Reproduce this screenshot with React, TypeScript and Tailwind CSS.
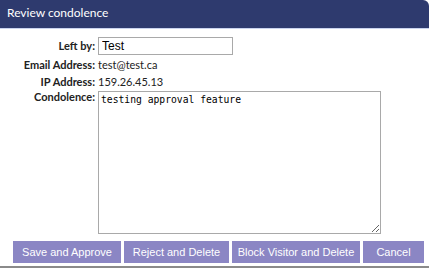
const buttons = [
  { label: 'Save and Approve', w: 'w-[108px]' },
  { label: 'Reject and Delete', w: 'w-[105px]' },
  { label: 'Block Visitor and Delete', w: 'w-[128px]' },
  { label: 'Cancel', w: 'w-[61px]' },
];

export default function App() {
  return (
    <div className="h-[268px] w-[429px] overflow-hidden bg-white font-['Lato',sans-serif]">
      {/* Dialog header */}
      <div className="h-[29px] rounded-tr-[6px] border-b border-[#c9d3ee] bg-[#2e3a6e] pl-[7px] pt-[5px] text-[12px] leading-[15px] text-white">
        Review condolence
      </div>

      {/* Form */}
      <div className="grid grid-cols-[95px_1fr] items-center gap-x-[3px] pt-[8px] text-[11px] text-[#222]">
        <div className="text-right font-bold">Left by:</div>
        <input
          defaultValue="Test"
          className="h-[18px] w-[135px] border border-[#a9a9a9] px-[3px] font-['Liberation_Sans',sans-serif] text-[12px] text-black outline-none"
        />

        <div className="mt-[1px] text-right font-bold leading-[17px]">Email Address:</div>
        <div className="mt-[1px] leading-[17px]">test@test.ca</div>

        <div className="text-right font-bold leading-[17px]">IP Address:</div>
        <div className="leading-[17px]">159.26.45.13</div>

        <div className="self-start text-right font-bold leading-[14px]">Condolence:</div>
        <textarea
          defaultValue="testing approval feature"
          className="mt-[1px] h-[143px] w-[283px] resize border border-[#a9a9a9] px-[2px] py-[1px] font-['DejaVu_Sans_Mono',monospace] text-[9.7px] leading-[13px] text-black outline-none"
        />
      </div>

      {/* Actions */}
      <div className="flex gap-[3px] pl-[13px] pt-[7px] font-['Liberation_Sans',sans-serif] text-[11px] text-white">
        {buttons.map((b) => (
          <button key={b.label} className={`h-[22px] shrink-0 whitespace-nowrap bg-[#8b86c4] ${b.w}`}>
            {b.label}
          </button>
        ))}
      </div>
      <div className="mt-[3px] h-[2px] bg-[#8a8a8a]" />
    </div>
  );
}
